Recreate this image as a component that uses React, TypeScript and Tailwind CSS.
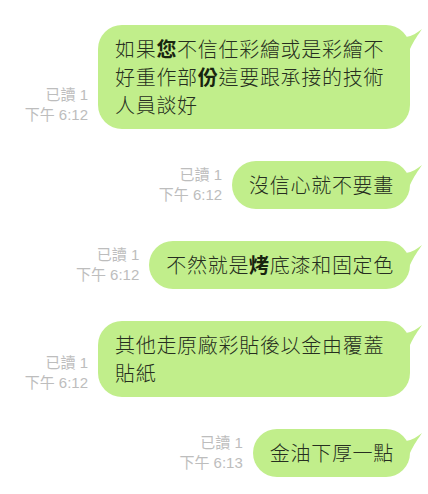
import React from "react";

/**
 * Chat message shape
 */
interface Message {
  parts: { text: string; bold?: boolean }[];
  time: string;
}

const messages: Message[] = [
  {
    parts: [
      { text: "如果" },
      { text: "您", bold: true },
      { text: "不信任彩繪或是彩繪不好重作部" },
      { text: "份", bold: true },
      { text: "這要跟承接的技術人員談好" },
    ],
    time: "下午 6:12",
  },
  { parts: [{ text: "沒信心就不要畫" }], time: "下午 6:12" },
  {
    parts: [
      { text: "不然就是" },
      { text: "烤", bold: true },
      { text: "底漆和固定色" },
    ],
    time: "下午 6:12",
  },
  { parts: [{ text: "其他走原廠彩貼後以金由覆蓋貼紙" }], time: "下午 6:12" },
  { parts: [{ text: "金油下厚一點" }], time: "下午 6:13" },
];

/**
 * Bubble tail, drawn at the top-right corner
 */
function Tail() {
  return (
    <svg
      className="absolute top-0 right-[-12px]"
      width="16"
      height="24"
      viewBox="0 0 16 24"
      aria-hidden="true"
    >
      <path d="M0 12 C6 11 11 8 16 4 C12 10 8 15 4 24 L0 24 Z" fill="#c1ee8b" />
    </svg>
  );
}

function MessageRow({ message }: { message: Message }) {
  return (
    <div className="flex items-end gap-[10px]">
      {/* Read receipt + time */}
      <div className="text-right text-[15px] leading-[20px] text-[#bdbdbd] font-normal pb-[4px] font-['Liberation_Sans','Noto_Sans_CJK_TC',sans-serif] whitespace-nowrap">
        <div>已讀 1</div>
        <div>{message.time}</div>
      </div>

      {/* Bubble */}
      <div className="relative max-w-[312px] bg-[#c1ee8b] rounded-[24px] pl-[17px] pr-[16px] py-[10px]">
        <Tail />
        <p className="text-[20px] leading-[28px] tracking-[0.7px] font-light text-[#262e20] font-['Noto_Sans_CJK_TC',sans-serif]">
          {message.parts.map((part, i) =>
            part.bold ? (
              <strong key={i} className="font-bold text-[#18240f]">
                {part.text}
              </strong>
            ) : (
              <span key={i}>{part.text}</span>
            ),
          )}
        </p>
      </div>
    </div>
  );
}

export default function App() {
  return (
    <div className="w-[428px] h-[494px] bg-white flex flex-col items-end gap-[32px] pt-[25px] pr-[18px] overflow-hidden">
      {messages.map((m, i) => (
        <MessageRow key={i} message={m} />
      ))}
    </div>
  );
}
